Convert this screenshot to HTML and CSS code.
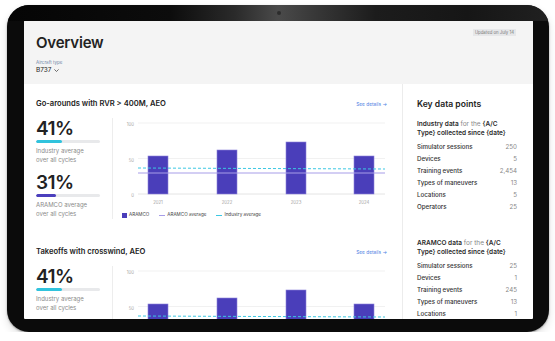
FILE: index.html
```html
<!DOCTYPE html>
<html>
<head>
  <title>Overview</title>
  <link rel="stylesheet" href="styles.css">
</head>
<body>
  <div class="device">
    <div class="bezel_topo"><span class="camera"></span></div>
    <div class="tela">

      <div class="cabecalho">
        <div>
          <h1 class="titulo">Overview</h1>
          <div class="filtro_label">Aircraft type</div>
          <div class="filtro">B737
            <svg class="seta_baixo" width="5" height="3" viewBox="0 0 5 3"><path d="M0.4 0.4 L2.5 2.5 L4.6 0.4" fill="none" stroke="#333" stroke-width="0.7"/></svg>
          </div>
        </div>
        <span class="atualizado">Updated on July 14</span>
      </div>

      <div class="conteudo">
        <div class="graficos">

          <div class="secao">
            <div class="secao_topo">
              <h2>Go-arounds with RVR &gt; 400M, AEO</h2>
              <a class="detalhes">See details →</a>
            </div>
            <div class="secao_corpo">
              <div class="stats">
                <div class="numero">41%</div>
                <div class="barra"><span class="fill_cyan" style="width: 41%"></span></div>
                <div class="legenda">Industry average<br>over all cycles</div>
                <div class="numero segundo">31%</div>
                <div class="barra"><span class="fill_roxo" style="width: 31%"></span></div>
                <div class="legenda">ARAMCO average<br>over all cycles</div>
              </div>
              <div class="grafico">
                <svg width="274" height="88" viewBox="0 0 274 88">
                  <g class="eixo">
                    <text x="21" y="7" text-anchor="end">100</text>
                    <text x="21" y="42.5" text-anchor="end">50</text>
                    <text x="21" y="78" text-anchor="end">0</text>
                  </g>
                  <line x1="25" y1="5" x2="272" y2="5" stroke="#eeeeee" stroke-width="0.8"/>
                  <line x1="25" y1="40.5" x2="272" y2="40.5" stroke="#eeeeee" stroke-width="0.8"/>
                  <line x1="25" y1="76" x2="272" y2="76" stroke="#dddddd" stroke-width="0.8"/>
                  <rect class="coluna" x="35" y="38" width="20" height="38"/>
                  <rect class="coluna" x="104" y="32" width="20" height="44"/>
                  <rect class="coluna" x="173" y="24" width="20" height="52"/>
                  <rect class="coluna" x="241" y="38" width="20" height="38"/>
                  <line x1="25" y1="55" x2="272" y2="55" stroke="#a79de8" stroke-width="1"/>
                  <line x1="25" y1="50" x2="272" y2="51" stroke="#3cc8e3" stroke-width="1" stroke-dasharray="3 2"/>
                  <g class="eixo">
                    <text x="45" y="85" text-anchor="middle">2021</text>
                    <text x="114" y="85" text-anchor="middle">2022</text>
                    <text x="183" y="85" text-anchor="middle">2023</text>
                    <text x="251" y="85" text-anchor="middle">2024</text>
                  </g>
                </svg>
                <div class="legendas">
                  <span class="item"><i class="quadrado"></i>ARAMCO</span>
                  <span class="item"><i class="linha"></i>ARAMCO average</span>
                  <span class="item"><i class="tracejado"></i>Industry average</span>
                </div>
              </div>
            </div>
          </div>

          <div class="secao">
            <div class="secao_topo">
              <h2>Takeoffs with crosswind, AEO</h2>
              <a class="detalhes">See details →</a>
            </div>
            <div class="secao_corpo">
              <div class="stats">
                <div class="numero">41%</div>
                <div class="barra"><span class="fill_cyan" style="width: 41%"></span></div>
                <div class="legenda">Industry average<br>over all cycles</div>
              </div>
              <div class="grafico">
                <svg width="274" height="88" viewBox="0 0 274 88">
                  <g class="eixo">
                    <text x="21" y="7" text-anchor="end">100</text>
                    <text x="21" y="42.5" text-anchor="end">50</text>
                  </g>
                  <line x1="25" y1="5" x2="272" y2="5" stroke="#eeeeee" stroke-width="0.8"/>
                  <line x1="25" y1="40.5" x2="272" y2="40.5" stroke="#eeeeee" stroke-width="0.8"/>
                  <line x1="25" y1="76" x2="272" y2="76" stroke="#dddddd" stroke-width="0.8"/>
                  <rect class="coluna" x="35" y="38" width="20" height="38"/>
                  <rect class="coluna" x="104" y="32" width="20" height="44"/>
                  <rect class="coluna" x="173" y="24" width="20" height="52"/>
                  <rect class="coluna" x="241" y="38" width="20" height="38"/>
                  <line x1="25" y1="55" x2="272" y2="55" stroke="#a79de8" stroke-width="1"/>
                  <line x1="25" y1="50" x2="272" y2="51" stroke="#3cc8e3" stroke-width="1" stroke-dasharray="3 2"/>
                </svg>
              </div>
            </div>
          </div>

        </div>

        <div class="dados">
          <h3>Key data points</h3>

          <p class="intro"><b>Industry data</b> for the <b>{A/C Type} collected since {date}</b></p>
          <div class="linha_dado"><span>Simulator sessions</span><span class="valor">250</span></div>
          <div class="linha_dado"><span>Devices</span><span class="valor">5</span></div>
          <div class="linha_dado"><span>Training events</span><span class="valor">2,454</span></div>
          <div class="linha_dado"><span>Types of maneuvers</span><span class="valor">13</span></div>
          <div class="linha_dado"><span>Locations</span><span class="valor">5</span></div>
          <div class="linha_dado"><span>Operators</span><span class="valor">25</span></div>

          <p class="intro segundo_bloco"><b>ARAMCO data</b> for the <b>{A/C Type} collected since {date}</b></p>
          <div class="linha_dado"><span>Simulator sessions</span><span class="valor">25</span></div>
          <div class="linha_dado"><span>Devices</span><span class="valor">1</span></div>
          <div class="linha_dado"><span>Training events</span><span class="valor">245</span></div>
          <div class="linha_dado"><span>Types of maneuvers</span><span class="valor">13</span></div>
          <div class="linha_dado"><span>Locations</span><span class="valor">1</span></div>
        </div>
      </div>

    </div>
  </div>
</body>
</html>
```

FILE: styles.css
```css
body {
  margin: 0;
  background-color: #fff;
  font-family: Inter, "Liberation Sans", sans-serif;
  color: #222;
}

/* moldura do tablet */
.device {
  box-sizing: border-box;
  width: 542px;
  height: 327px;
  margin: 5px 0 0 7px;
  padding: 0 16px 13px 17px;
  background-color: #0b0b0b;
  border-radius: 22px;
  overflow: hidden;
  box-shadow: 0 1px 2px rgba(0, 0, 0, 0.35), 0 4px 8px rgba(0, 0, 0, 0.12);
}

.bezel_topo {
  height: 16px;
  margin: 0 -16px 0 -17px;
  background: linear-gradient(90deg, #050505 0%, #0c0c0c 30%, #2a2a2a 42%, #4a4a4a 50%, #3a3a3a 56%, #1c1c1c 68%, #161616 85%, #202020 100%);
  display: flex;
  justify-content: center;
  align-items: center;
}

.camera {
  width: 4px;
  height: 4px;
  border-radius: 50%;
  background-color: #2c2c2c;
  margin-left: 2px;
}

.tela {
  width: 509px;
  height: 298px;
  background-color: #fff;
  overflow: hidden;
  border-radius: 1px;
}

/* cabecalho */
.cabecalho {
  box-sizing: border-box;
  height: 63px;
  padding: 12px 17px 0 12px;
  background-color: #f4f4f4;
  display: flex;
  justify-content: space-between;
  align-items: flex-start;
}

.titulo {
  margin: 0;
  font-size: 15px;
  line-height: 20px;
  font-weight: 600;
  letter-spacing: -0.2px;
}

.filtro_label {
  margin-top: 5.5px;
  font-size: 4.5px;
  line-height: 7px;
  color: #6f87a8;
}

.filtro {
  font-size: 6.5px;
  line-height: 9px;
  display: flex;
  align-items: center;
  gap: 2px;
}

.atualizado {
  margin-top: -4px;
  padding: 1px 2px;
  font-size: 4.3px;
  line-height: 5px;
  color: #7a7a7a;
  background-color: #e6e7e9;
}

/* conteudo */
.conteudo {
  display: flex;
}

.graficos {
  width: 378px;
  border-right: 1px solid #ececec;
}

.secao {
  padding: 15px 15px 13px 12px;
}

.secao_topo {
  display: flex;
  justify-content: space-between;
  align-items: center;
}

.secao_topo h2 {
  margin: 0;
  font-size: 7.6px;
  line-height: 10px;
  font-weight: 600;
}

.detalhes {
  font-size: 4.8px;
  color: #4f7fe3;
}

.secao_corpo {
  margin-top: 9px;
  display: flex;
}

.stats {
  width: 64px;
  padding-right: 12px;
  border-right: 1px solid #ededed;
}

.numero {
  font-size: 19px;
  line-height: 22px;
  font-weight: 600;
  letter-spacing: -0.5px;
}

.numero.segundo {
  margin-top: 8px;
}

.barra {
  height: 3px;
  border-radius: 2px;
  background-color: #e8e9eb;
  overflow: hidden;
}

.barra span {
  display: block;
  height: 100%;
  border-radius: 2px;
}

.fill_cyan {
  background-color: #31c3dd;
}

.fill_roxo {
  background-color: #4b3fbd;
}

.legenda {
  margin-top: 4px;
  font-size: 6px;
  line-height: 8.5px;
  color: #8a8a8a;
}

.grafico svg {
  display: block;
}

.eixo text {
  font-size: 4.3px;
  fill: #a3a3a3;
  dominant-baseline: middle;
}

.coluna {
  fill: #4a3eba;
  stroke: #8c82d9;
  stroke-width: 0.6;
}

.legendas {
  margin: 5px 0 0 9px;
  display: flex;
  gap: 10px;
  font-size: 4.6px;
  line-height: 8px;
  color: #444;
}

.item {
  display: flex;
  align-items: center;
  gap: 2px;
}

.quadrado {
  width: 5px;
  height: 5px;
  background-color: #4a3eba;
}

.linha {
  width: 6px;
  height: 1px;
  background-color: #a79de8;
}

.tracejado {
  width: 6px;
  border-top: 1px dashed #3cc8e3;
}

/* painel de dados */
.dados {
  box-sizing: border-box;
  width: 130px;
  padding: 15px 16px 0 14px;
}

.dados h3 {
  margin: 0;
  font-size: 8.6px;
  line-height: 10px;
  font-weight: 600;
}

.intro {
  margin: 10.5px 0 3.5px 0;
  font-size: 6.5px;
  line-height: 9px;
  color: #888;
}

.intro b {
  color: #2b2b2b;
  font-weight: 600;
}

.intro.segundo_bloco {
  margin-top: 25.5px;
}

.linha_dado {
  display: flex;
  justify-content: space-between;
  font-size: 6.2px;
  line-height: 12px;
  font-weight: 500;
  color: #333;
}

.valor {
  color: #888;
  font-weight: 400;
}
```
